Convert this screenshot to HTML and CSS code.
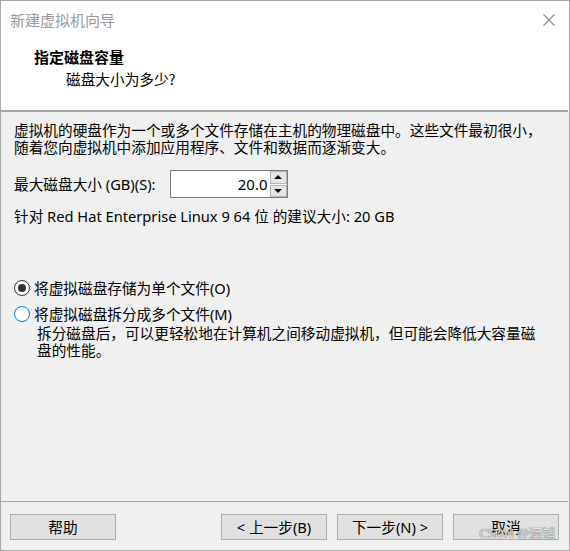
FILE: index.html
```html
<!DOCTYPE html>
<html lang="zh-CN">
<head>
<meta charset="utf-8">
<title>新建虚拟机向导</title>
<link rel="stylesheet" href="styles.css">
</head>
<body>
<div class="window">
  <div class="top">
    <div class="titlebar">
      <span class="title">新建虚拟机向导</span>
      <svg class="close" width="12" height="12" viewBox="0 0 12 12"><path d="M0.5 0.5 L11.5 11.5 M11.5 0.5 L0.5 11.5" stroke="#8a8a8a" stroke-width="1.1" fill="none"/></svg>
    </div>
    <div class="header">
      <div class="h-title">指定磁盘容量</div>
      <div class="h-sub">磁盘大小为多少?</div>
    </div>
  </div>
  <div class="sep-top"></div>
  <div class="content">
    <p class="intro">虚拟机的硬盘作为一个或多个文件存储在主机的物理磁盘中。这些文件最初很小，<br>随着您向虚拟机中添加应用程序、文件和数据而逐渐变大。</p>
    <div class="size-row">
      <span class="label">最大磁盘大小 (GB)(S):</span>
      <div class="spin">
        <span class="spin-value">20.0</span>
        <div class="spin-btns">
          <div class="spin-btn"><span class="arrow-up"></span></div>
          <div class="spin-btn"><span class="arrow-down"></span></div>
        </div>
      </div>
    </div>
    <p class="hint">针对 Red Hat Enterprise Linux 9 64 位 的建议大小: 20 GB</p>
    <div class="options">
      <div class="radio-row">
        <span class="radio checked"></span>
        <span>将虚拟磁盘存储为单个文件(O)</span>
      </div>
      <div class="radio-row">
        <span class="radio focus"></span>
        <span>将虚拟磁盘拆分成多个文件(M)</span>
      </div>
      <p class="desc">拆分磁盘后，可以更轻松地在计算机之间移动虚拟机，但可能会降低大容量磁<br>盘的性能。</p>
    </div>
  </div>
  <div class="sep-bottom"></div>
  <div class="footer">
    <button class="btn">帮助</button>
    <div class="btn-group">
      <button class="btn">&lt; 上一步(B)</button>
      <button class="btn">下一步(N) &gt;</button>
      <button class="btn">取消</button>
    </div>
  </div>
  <div class="watermark">CSDN @酒铺</div>
</div>
</body>
</html>
```
FILE: styles.css
```css
* { box-sizing: border-box; }
html, body { margin: 0; padding: 0; }
body {
  font-family: "Noto Sans", "Noto Sans CJK SC", sans-serif;
  font-size: 14.67px;
  color: #000;
  background: #f0f0f0;
}
.window {
  position: relative;
  width: 570px;
  height: 551px;
  border: 1px solid #a8a8a8;
  background: #f0f0f0;
  display: flex;
  flex-direction: column;
}
.top {
  background: #fff;
  height: 109px;
  display: flex;
  flex-direction: column;
}
.titlebar {
  height: 38px;
  display: flex;
  align-items: center;
  justify-content: space-between;
  padding: 0 14px 0 9px;
}
.title {
  font-family: "Noto Sans CJK SC", sans-serif;
  font-size: 15px;
  color: #9a9a9a;
  line-height: 20px;
}
.close { display: block; }
.header {
  padding-top: 8px;
  padding-left: 33px;
}
.h-title {
  font-family: "Noto Sans CJK SC", sans-serif;
  font-weight: 700;
  font-size: 15px;
  line-height: 20px;
}
.h-sub {
  font-family: "Noto Sans CJK SC", sans-serif;
  font-size: 14.67px;
  line-height: 20px;
  margin-top: 2px;
  padding-left: 32px;
}
.sep-top {
  height: 2px;
  background: #a6a6a6;
  margin-right: 1px;
}
.content {
  flex: 1;
  padding: 10px 0 0 13px;
  display: flex;
  flex-direction: column;
}
p { margin: 0; }
.intro { line-height: 17px; }
.size-row {
  display: flex;
  align-items: center;
  margin-top: 14px;
  gap: 14px;
}
.label { line-height: 17px; }
.spin {
  width: 118px;
  height: 28px;
  border: 1px solid #7a7a7a;
  background: #fff;
  display: flex;
  align-items: center;
  justify-content: flex-end;
}
.spin-value {
  font-size: 15px;
  line-height: 17px;
  padding-right: 2px;
}
.spin-btns {
  width: 17px;
  height: 26px;
  display: flex;
  flex-direction: column;
  gap: 1px;
}
.spin-btn {
  flex: 1;
  background: #e5e5e5;
  border: 1px solid #b5b5b5;
  display: flex;
  align-items: center;
  justify-content: center;
}
.arrow-up, .arrow-down {
  width: 0; height: 0;
  border-left: 4px solid transparent;
  border-right: 4px solid transparent;
}
.arrow-up { border-bottom: 4px solid #111; }
.arrow-down { border-top: 4px solid #111; }
.hint {
  margin-top: 10px;
  line-height: 17px;
}
.options {
  margin-top: 53px;
  display: flex;
  flex-direction: column;
  gap: 6px;
}
.radio-row {
  display: flex;
  align-items: center;
  gap: 4px;
  height: 20px;
  line-height: 20px;
}
.radio {
  width: 16px;
  height: 16px;
  border: 1px solid #333;
  border-radius: 50%;
  background: #fff;
  display: flex;
  align-items: center;
  justify-content: center;
}
.radio.checked::after {
  content: "";
  width: 8px;
  height: 8px;
  border-radius: 50%;
  background: #333;
}
.radio.focus { border-color: #0078d7; }
.desc {
  line-height: 17px;
  padding-left: 23px;
  margin-top: -5px;
}
.sep-bottom {
  height: 1px;
  background: #a6a6a6;
  margin-right: 1px;
}
.footer {
  height: 48px;
  display: flex;
  align-items: flex-start;
  justify-content: space-between;
  padding: 12px 10px 0 9px;
}
.btn-group {
  display: flex;
  gap: 10px;
}
.btn {
  width: 106px;
  height: 26px;
  background: #e1e1e1;
  border: 1px solid #adadad;
  font-family: "Noto Sans", "Noto Sans CJK SC", sans-serif;
  font-size: 14.67px;
  color: #000;
  padding: 0;
  line-height: 17px;
}
.watermark {
  position: absolute;
  right: 14px;
  bottom: 9px;
  font-family: "Noto Sans", "Noto Sans CJK SC", sans-serif;
  font-size: 13px;
  color: rgba(245, 245, 245, 0.9);
  text-shadow: 0 0 1px #555, 0 0 1px #777;
  line-height: 16px;
}
```
